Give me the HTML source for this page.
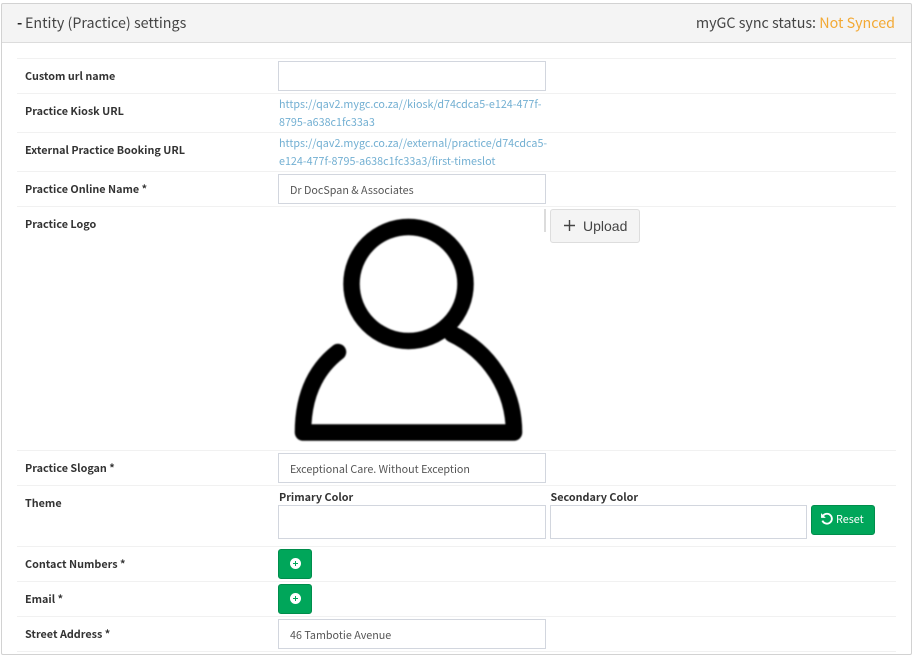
<!DOCTYPE html>
<html>
<head>
<meta charset="utf-8">
<style>
html,body{margin:0;padding:0;background:#fff;width:914px;height:655px;overflow:hidden}
body{font-family:"Noto Sans CJK JP","Liberation Sans",sans-serif;color:#333;position:relative}
div,span.a{position:absolute;white-space:nowrap}
.panel{left:1px;top:3px;width:909px;height:650px;border:1px solid #d2d2d2;border-radius:2px}
.head{left:2px;top:4px;width:909px;height:38px;background:#f4f4f4;border-bottom:1px solid #dcdcdc}
.sep{left:17px;width:879px;height:1px;background:#f1f1f1}
.l{left:25px;font-size:10.8px;font-weight:700;line-height:16px;color:#333}
.inp{left:278px;width:266px;height:28px;border:1px solid #d2d6de;background:#fff;font-size:10.75px;line-height:31px;text-indent:11px;color:#555}
.lnk{left:279px;font-size:10.75px;line-height:18px;color:#72afd2}
.g{background:#00a65a;border-radius:3px;border:1px solid #008d4c}
.plus{width:11px;height:11px;background:#fff;border-radius:50%}
.plus svg{position:absolute;left:0;top:0}
</style>
</head>
<body>
<div class="head"></div>
<div class="panel"></div>
<div style="left:17px;top:12px;font-size:14.3px;line-height:22px;font-weight:700;color:#222">-</div>
<div style="left:25px;top:12px;font-size:14.3px;line-height:22px;color:#444">Entity (Practice) settings</div>
<div style="right:19px;top:12px;font-size:14.3px;line-height:22px;color:#444">myGC sync status: <span style="color:#f39c12;opacity:.85">Not Synced</span></div>

<div class="sep" style="top:58px"></div>
<div class="sep" style="top:93px"></div>
<div class="sep" style="top:132px"></div>
<div class="sep" style="top:171px"></div>
<div class="sep" style="top:206px"></div>
<div class="sep" style="top:450px"></div>
<div class="sep" style="top:485px"></div>
<div class="sep" style="top:546px"></div>
<div class="sep" style="top:581px"></div>
<div class="sep" style="top:616px"></div>
<div class="sep" style="top:651px"></div>

<div class="l" style="top:68px">Custom url name</div>
<div class="l" style="top:103px">Practice Kiosk URL</div>
<div class="l" style="top:142px">External Practice Booking URL</div>
<div class="l" style="top:181px">Practice Online Name *</div>
<div class="l" style="top:216px">Practice Logo</div>
<div class="l" style="top:460px">Practice Slogan *</div>
<div class="l" style="top:495px">Theme</div>
<div class="l" style="top:556px">Contact Numbers *</div>
<div class="l" style="top:591px">Email *</div>
<div class="l" style="top:626px">Street Address *</div>

<div class="inp" style="top:61px"></div>
<div class="lnk" style="top:96px">https://qav2.mygc.co.za//kiosk/d74cdca5-e124-477f-<br>8795-a638c1fc33a3</div>
<div class="lnk" style="top:135px">https://qav2.mygc.co.za//external/practice/d74cdca5-<br>e124-477f-8795-a638c1fc33a3/first-timeslot</div>
<div class="inp" style="top:174px">Dr DocSpan &amp; Associates</div>

<svg style="position:absolute;left:280px;top:205px;filter:blur(.7px)" width="260" height="245" viewBox="280 205 260 245">
<g fill="none" stroke="#000" stroke-width="16.5" stroke-linecap="round" stroke-linejoin="round">
<circle cx="408.500" cy="284" r="57"/>
<path d="M338 352C316 369 303 395 303 432.500H514C514 388 488 351 452 334"/>
</g>
</svg>

<div style="left:544px;top:209px;width:2px;height:23px;background:#dcdcdc"></div>
<div style="left:550px;top:209px;width:88px;height:32px;background:#f4f4f4;border:1px solid #ddd;border-radius:3px"></div>
<svg style="position:absolute;left:563px;top:219px" width="13" height="13" viewBox="0 0 13 13"><path d="M6.5 1V12M1 6.5H12" stroke="#444" stroke-width="1.4" fill="none"/></svg>
<div style="left:583px;top:216px;font-family:'Liberation Sans',sans-serif;font-size:14px;line-height:20px;color:#444">Upload</div>

<div class="inp" style="top:453px">Exceptional Care. Without Exception</div>
<div class="l" style="left:279px;top:489px">Primary Color</div>
<div class="l" style="left:550.500px;top:489px">Secondary Color</div>
<div class="inp" style="top:505px;height:32px"></div>
<div class="inp" style="top:505px;left:550px;width:255px;height:32px"></div>
<div class="g" style="left:811px;top:505px;width:62px;height:28px"></div>
<svg style="position:absolute;left:820px;top:512px" width="14" height="14" viewBox="0 0 13 13"><path d="M3 3.2A4.6 4.6 0 1 1 2.2 8" fill="none" stroke="#fff" stroke-width="1.7"/><path d="M1 1V5.4H5.4Z" fill="#fff"/></svg>
<div style="left:836px;top:511px;font-size:10.8px;line-height:17px;color:#fff">Reset</div>

<div class="g" style="left:278px;top:549px;width:32px;height:28px"></div>
<div class="plus" style="left:290px;top:558px"><svg width="11" height="11" viewBox="0 0 11 11"><path d="M5.500 3V8M3 5.500H8" stroke="#00a65a" stroke-width="1"/></svg></div>
<div class="g" style="left:278px;top:584px;width:32px;height:28px"></div>
<div class="plus" style="left:290px;top:593px"><svg width="11" height="11" viewBox="0 0 11 11"><path d="M5.500 3V8M3 5.500H8" stroke="#00a65a" stroke-width="1"/></svg></div>

<div class="inp" style="top:619px">46 Tambotie Avenue</div>
</body>
</html>
